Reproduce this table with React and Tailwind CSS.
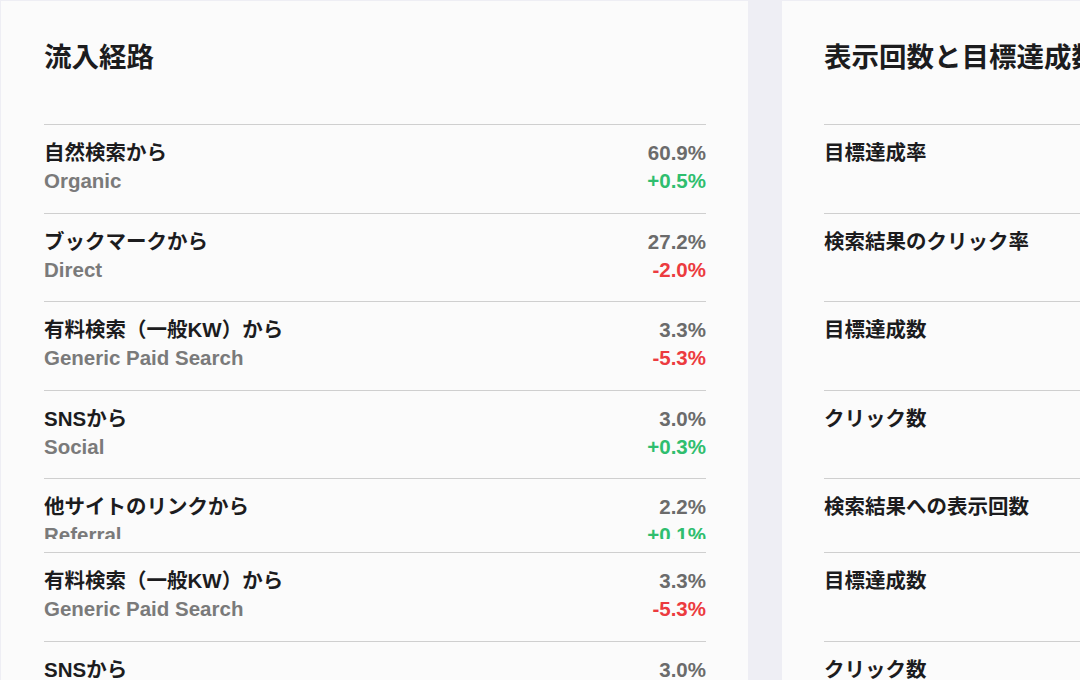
const font = { fontFamily: '"Liberation Sans", "Noto Sans CJK JP", sans-serif' };

const channels = [
  { ja: "自然検索から", en: "Organic", share: "60.9%", diff: "+0.5%" },
  { ja: "ブックマークから", en: "Direct", share: "27.2%", diff: "-2.0%" },
  { ja: "有料検索（一般KW）から", en: "Generic Paid Search", share: "3.3%", diff: "-5.3%" },
  { ja: "SNSから", en: "Social", share: "3.0%", diff: "+0.3%" },
  { ja: "他サイトのリンクから", en: "Referral", share: "2.2%", diff: "+0.1%", clipped: true },
  { ja: "有料検索（一般KW）から", en: "Generic Paid Search", share: "3.3%", diff: "-5.3%" },
  { ja: "SNSから", en: "Social", share: "3.0%", diff: "+0.3%" },
];

const metrics = [
  { ja: "目標達成率" },
  { ja: "検索結果のクリック率" },
  { ja: "目標達成数" },
  { ja: "クリック数" },
  { ja: "検索結果への表示回数", clipped: true },
  { ja: "目標達成数" },
  { ja: "クリック数" },
];

function Row({ item, children }) {
  return (
    <div className={`border-t border-[#cfcfcf] ${item.clipped ? "h-[74px]" : "h-[88.5px]"}`}>
      <div className={`flex justify-between pt-[14px] leading-[28px] ${item.clipped ? "h-[60px] overflow-hidden" : ""}`}>
        <div>
          <div className="text-[20.5px] font-bold text-[#1c1c1e]">{item.ja}</div>
          {item.en && <div className="text-[20.5px] font-bold text-[#7a7a7a]">{item.en}</div>}
        </div>
        {children}
      </div>
    </div>
  );
}

function Card({ title, pad, children }) {
  return (
    <section className={`w-[747px] shrink-0 bg-[#fbfbfb] ${pad}`}>
      <h2 className="pt-[38px] pb-[47px] text-[27.5px] font-bold leading-[38px] text-[#1c1c1e] whitespace-nowrap">{title}</h2>
      <div className="w-[662px]">{children}</div>
    </section>
  );
}

export default function App() {
  return (
    <main className="flex h-[680px] gap-[34px] overflow-hidden bg-[#eeeef4] pl-[1px] pt-[1px]" style={font}>
      <Card title="流入経路" pad="pl-[43px]">
        {channels.map((c, i) => (
          <Row key={i} item={c}>
            <div className="text-right text-[20.5px] font-bold">
              <div className="text-[#6b6b6b]">{c.share}</div>
              <div className={c.diff.startsWith("+") ? "text-[#2fbe6e]" : "text-[#ec3b3f]"}>{c.diff}</div>
            </div>
          </Row>
        ))}
      </Card>
      <Card title="表示回数と目標達成数" pad="pl-[42px]">
        {metrics.map((m, i) => (
          <Row key={i} item={m} />
        ))}
      </Card>
    </main>
  );
}
